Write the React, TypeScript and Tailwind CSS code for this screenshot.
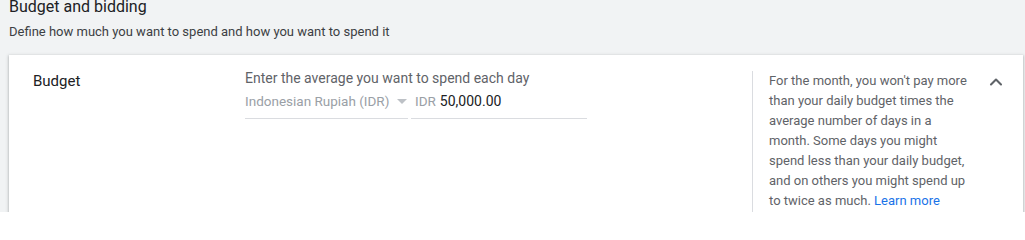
import { ChevronUp } from "lucide-react";

export default function App() {
  return (
    <div className="h-[212px] w-[1025px] overflow-hidden bg-[#f1f3f4] font-['Roboto',sans-serif]">
      <div className="-mt-[5px] pl-[9px]">
        <h2 className="text-[16px] leading-[24px] text-[#202124]">Budget and bidding</h2>
        <p className="mt-[3px] text-[13px] leading-[20px] text-[#3c4043]">
          Define how much you want to spend and how you want to spend it
        </p>
      </div>
      <div className="ml-[9px] mt-[13px] h-[200px] w-[1014px] bg-white shadow-[0_1px_2px_rgba(60,64,67,0.3),0_1px_3px_1px_rgba(60,64,67,0.15)]">
        <div className="flex h-full pt-[13px]">
          <div className="w-[212px] pl-[24px] pt-[3px] text-[15px] leading-[20px] text-[#202124]">Budget</div>
          <div className="w-[507px] pl-[24px]">
            <div className="text-[14px] leading-[20px] text-[#5f6368]">Enter the average you want to spend each day</div>
            <div className="mt-[2px] flex gap-[3px]">
              <div className="flex h-[29px] w-[163px] items-start border-b border-[#dadce0] pt-[1px]">
                <span className="text-[13.5px] leading-[20px] text-[#9aa0a6]">Indonesian Rupiah (IDR)</span>
                <svg width="10" height="5" viewBox="0 0 10 5" className="ml-[8px] mt-[8px]">
                  <path d="M0 0 L5 5 L10 0 Z" fill="#bdc1c6" />
                </svg>
              </div>
              <div className="flex h-[29px] w-[176px] items-start border-b border-[#dadce0] pl-[4px] pt-[1px]">
                <span className="text-[13.5px] leading-[20px] text-[#9aa0a6]">IDR</span>
                <span className="ml-[4px] text-[14px] leading-[20px] text-[#202124]">50,000.00</span>
              </div>
            </div>
          </div>
          <div className="ml-[24px] mt-[3px] flex border-l border-[#dadce0] pl-[16px]">
            <p className="w-[200px] text-[13px] leading-[20px] text-[#5f6368]">
              For the month, you won't pay more than your daily budget times the average number of days in a month. Some days you might spend less than your daily budget, and on others you might spend up to twice as much.{" "}
              <a className="text-[#1a73e8]">Learn more</a>
            </p>
            <ChevronUp className="ml-[17px] mt-[1px] h-[20px] w-[20px] text-[#5f6368]" strokeWidth={2.5} />
          </div>
        </div>
      </div>
    </div>
  );
}
